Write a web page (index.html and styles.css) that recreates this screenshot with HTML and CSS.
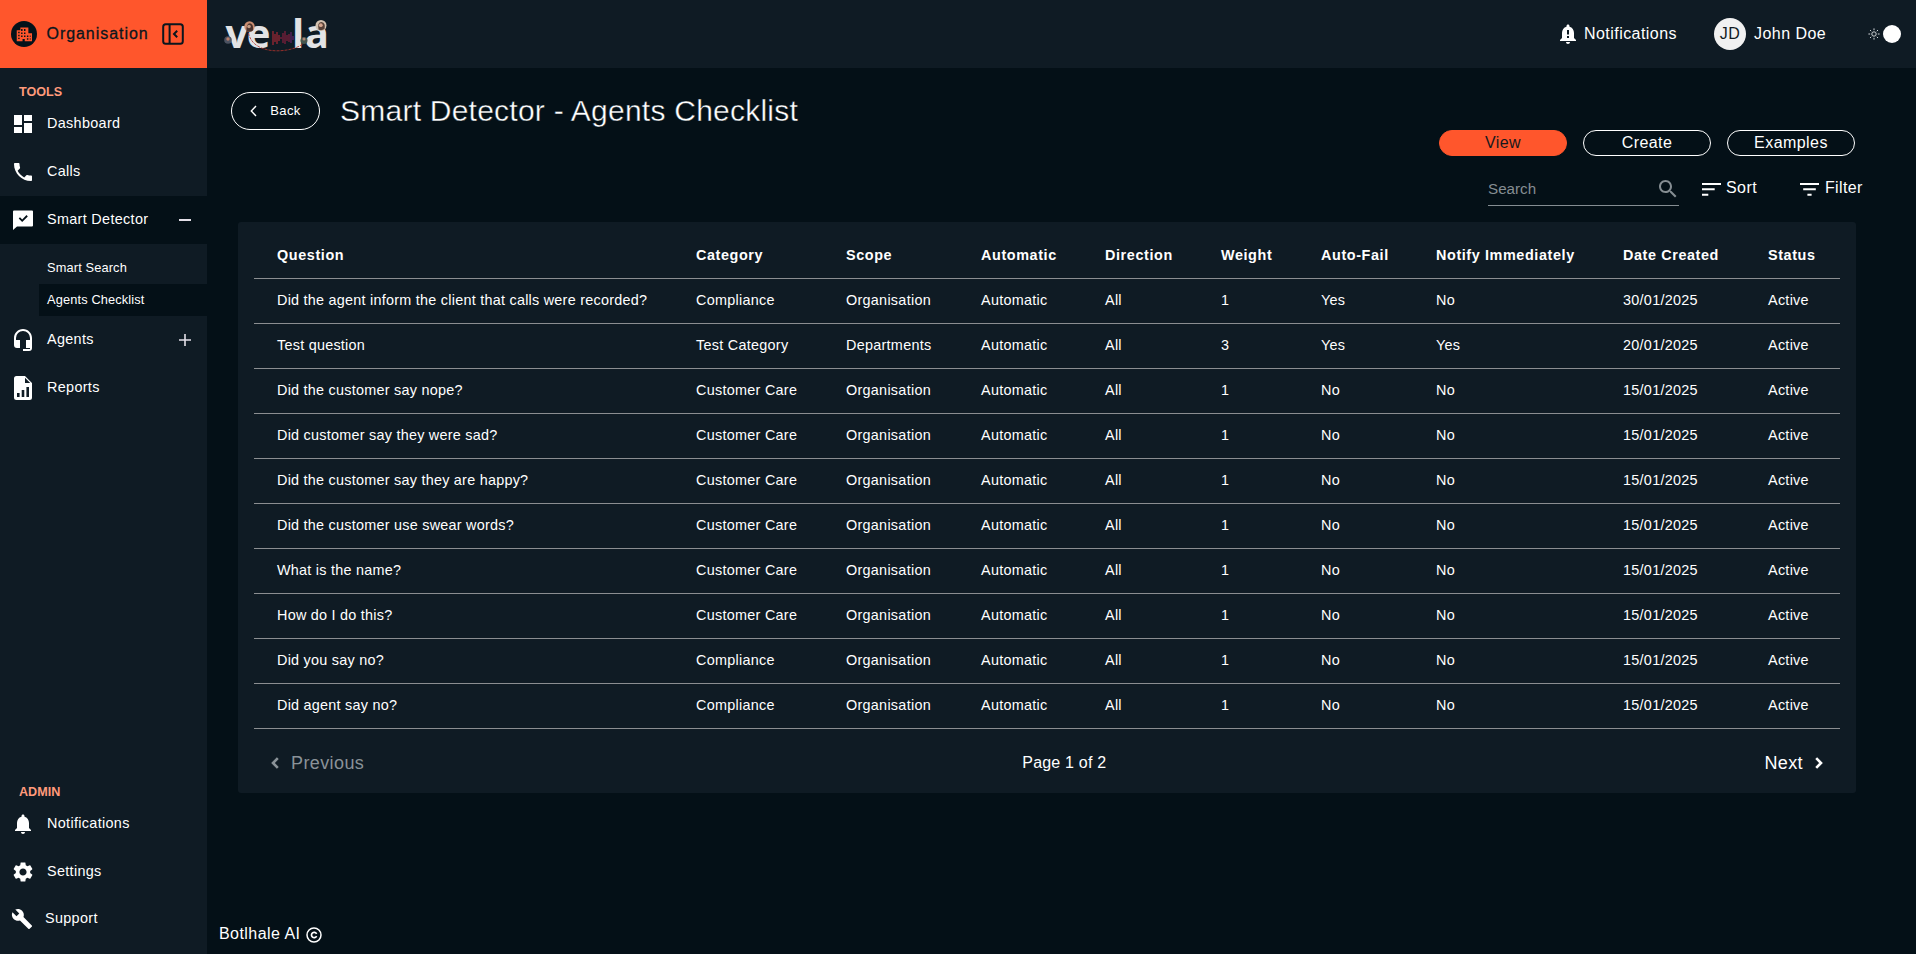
FILE: index.html
```html
<!DOCTYPE html>
<html lang="en">
<head>
<meta charset="utf-8">
<title>Smart Detector - Agents Checklist</title>
<link rel="stylesheet" href="styles.css">
</head>
<body>
<div class="app">
  <aside class="sidebar">
    <div class="org">
      <span class="org-badge"><svg width="16" height="16" viewBox="1 2 22 20"><path fill="currentColor" fill-rule="evenodd" d="M18 11V3H7v4H2v15h8v-3h3v3h10V11zM6 19H4v-2h2zm0-4H4v-2h2zm0-4H4V9h2zm4 5H8v-2h2zm0-4H8v-2h2zm0-4H8V5h2zm4 8h-2v-2h2zm0-4h-2v-2h2zm0-4h-2V5h2zm4 12h-2v-2h2zm0-4h-2v-2h2zm3 4h-1v-2h1zm0-4h-1v-2h1z"/></svg></span>
      <span class="org-name">Organisation</span>
      <svg class="collapse" width="22" height="22" viewBox="0 0 22 22" fill="none" stroke="currentColor" stroke-width="2"><rect x="1.2" y="1.2" width="19.6" height="19.6" rx="2.500"/><path d="M7.600 1v20M15.200 7.800L12 11l3.200 3.200"/></svg>
    </div>
    <h2 class="group">TOOLS</h2>
    <nav class="nav">
      <a class="item"><svg class="ico" viewBox="0 0 24 24"><path d="M3 13h8V3H3zm0 8h8v-6H3zm10 0h8V11h-8zm0-18v6h8V3z"/></svg>Dashboard</a>
      <a class="item"><svg class="ico" viewBox="0 0 24 24"><path d="M6.620 10.790c1.440 2.830 3.760 5.140 6.590 6.590l2.200-2.200c.27-.27.67-.36 1.020-.24 1.120.37 2.330.57 3.570.57.55 0 1 .45 1 1V20c0 .55-.45 1-1 1C10.610 21 3 13.390 3 4c0-.55.45-1 1-1h3.500c.55 0 1 .45 1 1 0 1.250.2 2.450.57 3.570.11.35.03.74-.25 1.020z"/></svg>Calls</a>
      <a class="item active"><svg class="ico" viewBox="0 0 24 24"><path fill-rule="evenodd" d="M3 2.500h18a1 1 0 0 1 1 1V17.500a1 1 0 0 1-1 1H6L2 22V3.500a1 1 0 0 1 1-1zM11.200 14L16.800 8.400 15.500 7.100 11.200 11.400 9 9.200 7.700 10.500z"/></svg>Smart Detector<span class="toggle"><svg width="12" height="12" viewBox="0 0 12 12"><path d="M0 5h12v2H0z"/></svg></span></a>
      <div class="sub">
        <a class="subitem">Smart Search</a>
        <a class="subitem current">Agents Checklist</a>
      </div>
      <a class="item"><svg class="ico" viewBox="0 0 24 24"><path d="M12 1C7 1 3 5 3 10v7a3 3 0 0 0 3 3h3v-8H5v-2a7 7 0 0 1 14 0v2h-4v8h4v1h-7v2h6a3 3 0 0 0 3-3V10c0-5-4.030-9-9-9z"/></svg>Agents<span class="toggle"><svg width="12" height="12" viewBox="0 0 12 12"><path d="M0 5.200h5.200V0h1.600v5.200H12v1.600H6.800V12H5.200V6.800H0z"/></svg></span></a>
      <a class="item"><svg class="ico" viewBox="0 0 24 24"><path fill-rule="evenodd" d="M5.500 0H14l7 7v14.500a2.500 2.500 0 0 1-2.500 2.500h-13A2.500 2.500 0 0 1 3 21.500v-19A2.500 2.500 0 0 1 5.500 0zM14 1.800V7h5.200zM6 17v4h2.600v-4zm4.700-3v7h2.600v-7zm4.700-3v10H18V11z"/></svg>Reports</a>
    </nav>
    <h2 class="group group-admin">ADMIN</h2>
    <nav class="nav nav-admin">
      <a class="item"><svg class="ico" viewBox="0 0 24 24"><path d="M12 22c1.100 0 2-.9 2-2h-4c0 1.100.89 2 2 2zm6-6v-5c0-3.070-1.640-5.640-4.500-6.320V4c0-.83-.67-1.500-1.500-1.500s-1.500.67-1.500 1.500v.68C7.630 5.360 6 7.920 6 11v5l-2 2v1h16v-1z"/></svg>Notifications</a>
      <a class="item"><svg class="ico" viewBox="0 0 24 24"><path d="M19.140 12.940c.04-.3.06-.61.06-.94 0-.32-.02-.64-.07-.94l2.030-1.580c.18-.14.23-.41.12-.61l-1.920-3.320c-.12-.22-.37-.29-.59-.22l-2.390.96c-.5-.38-1.030-.7-1.620-.94l-.36-2.540c-.04-.24-.24-.41-.48-.41h-3.840c-.24 0-.43.17-.47.41l-.36 2.540c-.59.24-1.130.57-1.620.94l-2.390-.96c-.22-.08-.47 0-.59.22L2.740 8.870c-.12.21-.08.47.12.61l2.030 1.580c-.05.3-.09.63-.09.94s.02.64.07.94l-2.030 1.580c-.18.14-.23.41-.12.61l1.920 3.320c.12.22.37.29.59.22l2.390-.96c.5.38 1.030.7 1.620.94l.36 2.540c.05.24.24.41.48.41h3.840c.24 0 .44-.17.47-.41l.36-2.540c.59-.24 1.130-.56 1.620-.94l2.390.96c.22.08.47 0 .59-.22l1.920-3.320c.12-.22.07-.47-.12-.61zM12 15.600c-1.980 0-3.600-1.620-3.600-3.600s1.620-3.600 3.600-3.600 3.600 1.620 3.600 3.600-1.620 3.600-3.600 3.600z"/></svg>Settings</a>
      <a class="item support"><svg class="ico wrench" viewBox="0 0 24 24"><path d="M22.700 19l-9.100-9.100c.9-2.300.4-5-1.500-6.900-2-2-5-2.400-7.400-1.300L9 6 6 9 1.600 4.700C.4 7.100.9 10.100 2.900 12.100c1.900 1.900 4.600 2.400 6.900 1.500l9.100 9.100c.4.4 1 .4 1.400 0l2.300-2.300c.5-.4.5-1.100.1-1.400z"/></svg>Support</a>
    </nav>
  </aside>

  <div class="content">
    <header class="topbar">
      <svg class="logo" width="110" height="60" viewBox="0 -8 110 60" role="img" aria-label="vela">
        <g class="logo-text"><text x="1.500" y="36" textLength="44">ve</text><text x="68" y="36" textLength="36">la</text></g>
        <g stroke="#7d1f3c" stroke-width="1.300"><path stroke="#9a2733" d="M49 19v14M51 22v8M53 20v12M55 23v6"/><path d="M57 25v2M59 21v10M61 19v13M63 23v6M65 22v8"/><path stroke="#5b2365" d="M67 20v11M69 24v4"/></g>
        <path d="M24 17C25 44 65 42 79 32" fill="none" stroke="#b5332c" stroke-width=".8" stroke-dasharray="3 1"/>
        <circle cx="25.500" cy="14.500" r="5.200" fill="#c98d70"/><path d="M22.500 19.200q-.5-8 3.500-8 3.500.5 3.200 7-3 2.500-6.700 1z" fill="#4b322c"/><circle cx="25" cy="14.500" r="1.800" fill="#c29a83"/>
        <circle cx="97" cy="13.500" r="5.500" fill="#d3c2b0"/><path d="M94.500 17.500q-1.500-7.500 3-7.500 4.500 1 3 7-3 2-6 .5z" fill="#584137"/><circle cx="96.800" cy="13.200" r="1.900" fill="#d6a78f"/>
        <circle cx="4" cy="28" r="3.800" fill="#4b5261"/><circle cx="4" cy="27" r="1.700" fill="#b9806b"/>
        <circle cx="80" cy="28.500" r="3.500" fill="#46574f"/><circle cx="80" cy="27" r="1.500" fill="#b08474"/>
      </svg>
      <div class="top-right">
        <a class="notif"><svg width="24" height="24" viewBox="0 0 24 24"><path fill="currentColor" fill-rule="evenodd" d="M12 22c1.100 0 2-.9 2-2h-4c0 1.100.89 2 2 2zm6-6v-5c0-3.070-1.640-5.640-4.500-6.320V4c0-.83-.67-1.500-1.500-1.500s-1.500.67-1.500 1.500v.68C7.630 5.360 6 7.920 6 11v5l-2 2v1h16v-1zM11 8h2v4.500h-2zm0 6h2v2h-2z"/></svg>Notifications</a>
        <div class="user"><span class="avatar">JD</span>John Doe</div>
        <div class="theme"><svg width="12" height="12" viewBox="0 0 12 12" fill="none" stroke="#d0d4d6" stroke-width="1"><circle cx="6" cy="6" r="2.200"/><path d="M6 .4v1.800M6 9.800v1.800M.4 6h1.800M9.800 6h1.800M2 2l1.200 1.200M8.800 8.800L10 10M2 10l1.200-1.200M8.800 3.200L10 2"/></svg><span class="knob"></span></div>
      </div>
    </header>

    <main class="main">
      <div class="title-row">
        <button class="back"><svg width="7" height="12" viewBox="0 0 7 12" fill="none" stroke="currentColor" stroke-width="1.400"><path d="M6 1L1.300 6 6 11"/></svg>Back</button>
        <h1>Smart Detector - Agents Checklist</h1>
      </div>
      <div class="tabs"><button class="tab on">View</button><button class="tab">Create</button><button class="tab">Examples</button></div>
      <div class="tools">
        <label class="search"><span>Search</span><svg width="24" height="24" viewBox="0 0 24 24"><path fill="currentColor" d="M15.500 14h-.79l-.28-.27C15.410 12.590 16 11.110 16 9.500 16 5.910 13.090 3 9.500 3S3 5.910 3 9.500 5.910 16 9.500 16c1.610 0 3.090-.59 4.230-1.570l.27.28v.79l5 4.990L20.490 19zm-6 0C7.010 14 5 11.990 5 9.500S7.010 5 9.500 5 14 7.010 14 9.500 11.990 14 9.500 14z"/></svg></label>
        <a class="tool sort"><svg width="19" height="13" viewBox="0 0 19 13"><path fill="currentColor" d="M0 0h19v2H0zM0 5.300h12.700v2H0zM0 10.700h6.300v2H0z"/></svg>Sort</a>
        <a class="tool filter"><svg width="19" height="13" viewBox="0 0 19 13"><path fill="currentColor" d="M0 0h19v2H0zM3.200 5.300h12.600v2H3.200zM7.400 10.700h4.200v2H7.400z"/></svg>Filter</a>
      </div>

      <section class="panel">
        <table class="grid">
          <colgroup><col class="c1"><col class="c2"><col class="c3"><col class="c4"><col class="c5"><col class="c6"><col class="c7"><col class="c8"><col class="c9"><col></colgroup>
          <thead><tr><th>Question</th><th>Category</th><th>Scope</th><th>Automatic</th><th>Direction</th><th>Weight</th><th>Auto-Fail</th><th>Notify Immediately</th><th>Date Created</th><th>Status</th></tr></thead>
          <tbody>
            <tr><td>Did the agent inform the client that calls were recorded?</td><td>Compliance</td><td>Organisation</td><td>Automatic</td><td>All</td><td>1</td><td>Yes</td><td>No</td><td>30/01/2025</td><td>Active</td></tr>
            <tr><td>Test question</td><td>Test Category</td><td>Departments</td><td>Automatic</td><td>All</td><td>3</td><td>Yes</td><td>Yes</td><td>20/01/2025</td><td>Active</td></tr>
            <tr><td>Did the customer say nope?</td><td>Customer Care</td><td>Organisation</td><td>Automatic</td><td>All</td><td>1</td><td>No</td><td>No</td><td>15/01/2025</td><td>Active</td></tr>
            <tr><td>Did customer say they were sad?</td><td>Customer Care</td><td>Organisation</td><td>Automatic</td><td>All</td><td>1</td><td>No</td><td>No</td><td>15/01/2025</td><td>Active</td></tr>
            <tr><td>Did the customer say they are happy?</td><td>Customer Care</td><td>Organisation</td><td>Automatic</td><td>All</td><td>1</td><td>No</td><td>No</td><td>15/01/2025</td><td>Active</td></tr>
            <tr><td>Did the customer use swear words?</td><td>Customer Care</td><td>Organisation</td><td>Automatic</td><td>All</td><td>1</td><td>No</td><td>No</td><td>15/01/2025</td><td>Active</td></tr>
            <tr><td>What is the name?</td><td>Customer Care</td><td>Organisation</td><td>Automatic</td><td>All</td><td>1</td><td>No</td><td>No</td><td>15/01/2025</td><td>Active</td></tr>
            <tr><td>How do I do this?</td><td>Customer Care</td><td>Organisation</td><td>Automatic</td><td>All</td><td>1</td><td>No</td><td>No</td><td>15/01/2025</td><td>Active</td></tr>
            <tr><td>Did you say no?</td><td>Compliance</td><td>Organisation</td><td>Automatic</td><td>All</td><td>1</td><td>No</td><td>No</td><td>15/01/2025</td><td>Active</td></tr>
            <tr><td>Did agent say no?</td><td>Compliance</td><td>Organisation</td><td>Automatic</td><td>All</td><td>1</td><td>No</td><td>No</td><td>15/01/2025</td><td>Active</td></tr>
          </tbody>
        </table>
        <div class="pager">
          <a class="prev"><svg width="8" height="12" viewBox="0 0 8 12" fill="none" stroke="currentColor" stroke-width="2.600"><path d="M6.800 1.200L2 6l4.800 4.800"/></svg>Previous</a>
          <span class="page">Page 1 of 2</span>
          <a class="next">Next<svg width="8" height="12" viewBox="0 0 8 12" fill="none" stroke="currentColor" stroke-width="2.600"><path d="M1.200 1.200L6 6l-4.800 4.800"/></svg></a>
        </div>
      </section>
      <footer class="footer">Botlhale AI<svg width="16" height="16" viewBox="0 0 16 16" fill="none" stroke="currentColor" stroke-width="1.500"><circle cx="8" cy="8" r="7"/><path d="M10.600 6.800a2.700 2.700 0 1 0 0 2.400" stroke-width="1.700"/></svg></footer>
    </main>
  </div>
</div>
</body>
</html>
```
FILE: styles.css
```css
* { box-sizing: border-box; }
body {
  margin: 0;
  background: #041017;
  color: #fff;
  font: 16px/20px "Liberation Sans", Arial, sans-serif;
  letter-spacing: .45px;
}
svg { display: block; flex: none; }
button { font: inherit; letter-spacing: inherit; color: inherit; background: none; }
.app { display: flex; width: 1916px; height: 954px; overflow: hidden; }

/* Sidebar */
.sidebar { width: 207px; background: #0f1b24; display: flex; flex-direction: column; flex: none; }
.org { height: 68px; background: #ff562c; color: #0b161e; display: flex; align-items: center; padding-left: 11px; }
.org-badge { width: 26px; height: 26px; border-radius: 50%; background: #04121a; color: #ff562c; display: grid; place-items: center; flex: none; }
.org-name { width: 125px; flex: none; padding-left: 9.5px; letter-spacing: .95px; -webkit-text-stroke: .3px #0b161e; }
.group { margin: 16px 0 0 19px; height: 16px; font-size: 12.6px; line-height: 16px; font-weight: 700; color: #ff9a7b; letter-spacing: 0; }
.nav { font-size: 14.4px; letter-spacing: .33px; }
.item { display: flex; align-items: center; height: 48px; padding: 0 16px 2px 11px; gap: 12px; }
.ico { width: 24px; height: 24px; fill: #fff; margin-top: 2px; }
.toggle { margin-left: auto; fill: #e4e0e8; padding-top: 2px; }
.active { background: #041017; }
.sub { padding: 8px 0 0 39px; font-size: 12.8px; letter-spacing: .14px; }
.subitem { display: flex; align-items: center; height: 32px; padding-left: 8px; }
.current { background: #041017; }
.group-admin { margin-top: auto; }
.nav-admin { height: 154px; }
.support { gap: 12px; height: 46px; }
.wrench { width: 22px; height: 22px; }

/* Top bar */
.content { flex: 1; display: flex; flex-direction: column; }
.topbar { height: 68px; background: #0f1b24; display: flex; justify-content: space-between; padding: 0 15px 0 17px; }
.logo { margin-top: 4px; }
.logo-text { font: 700 40px "Open Sans", sans-serif; fill: #e2e3e5; letter-spacing: -1px; }
.top-right { display: flex; align-items: center; height: 68px; }
.notif { display: flex; align-items: center; gap: 4px; width: 158px; }
.user { display: flex; align-items: center; gap: 8px; width: 154px; }
.avatar { width: 32px; height: 32px; border-radius: 50%; background: #f1f1f1; color: #121b22; display: grid; place-items: center; }
.theme { display: flex; align-items: center; gap: 3px; }
.knob { width: 18px; height: 18px; border-radius: 50%; background: #fff; }

/* Page head */
.main { flex: 1; display: flex; flex-direction: column; align-items: stretch; }
.title-row { display: flex; align-items: center; gap: 20px; height: 38px; margin: 24px 0 0 24px; }
.back { display: flex; align-items: center; justify-content: center; gap: 13px; width: 89px; height: 38px; padding: 0; border: 1px solid #fff; border-radius: 19px; font-size: 13px; letter-spacing: .4px; }
h1 { margin: 0; font-size: 30px; line-height: 36px; font-weight: 400; letter-spacing: .24px; -webkit-text-stroke: .4px #041017; }
.tabs { display: flex; justify-content: flex-end; gap: 16px; padding-right: 61px; }
.tab { width: 128px; height: 26px; padding: 0; border: 1px solid #fff; border-radius: 13px; line-height: 22px; }
.on { background: #ff562c; border-color: #ff562c; color: #16191d; }
.tools { display: flex; justify-content: flex-end; align-items: flex-start; height: 66px; padding: 20px 53px 0 0; }
.search { display: flex; align-items: center; justify-content: space-between; width: 191px; height: 30px; padding-bottom: 3px; border-bottom: 1px solid #858d92; color: #858d92; font-size: 15.2px; letter-spacing: 0; }
.search svg { margin: -1px -1px 0 0; }
.tool { display: flex; align-items: center; height: 24px; gap: 5px; }
.tool svg { margin-top: 3px; }
.sort { margin-left: 23px; width: 98px; }
.filter { gap: 6px; width: 63px; letter-spacing: .35px; }

/* Table */
.panel { width: 1618px; height: 571px; margin-left: 31px; padding: 11px 16px 0; background: #0f1b24; border-radius: 3px; }
.grid { table-layout: fixed; width: 1586px; border-collapse: separate; border-spacing: 0; font-size: 14.4px; letter-spacing: .28px; text-align: left; }
.grid th, .grid td { height: 45px; padding: 0 0 2px; border-bottom: 1px solid #8b8e91; white-space: nowrap; }
.grid th { height: 46px; letter-spacing: .6px; }
.grid th:first-child, .grid td:first-child { padding-left: 23px; letter-spacing: .25px; }
.grid th:first-child { letter-spacing: .6px; }
.c1 { width: 442px; }
.c2 { width: 150px; }
.c3 { width: 135px; }
.c4 { width: 124px; }
.c5 { width: 116px; }
.c6 { width: 100px; }
.c7 { width: 115px; }
.c8 { width: 187px; }
.c9 { width: 145px; }
.pager { display: flex; justify-content: space-between; align-items: center; height: 68px; padding: 0 17px; font-size: 18px; letter-spacing: .4px; }
.prev, .next { display: flex; align-items: center; gap: 12px; }
.prev { color: #8a9298; }
.page { font-size: 16px; letter-spacing: .2px; }
.footer { display: flex; align-items: center; gap: 6px; margin: auto 0 10px 12px; height: 20px; }
.footer svg { margin-top: 2px; }
```
